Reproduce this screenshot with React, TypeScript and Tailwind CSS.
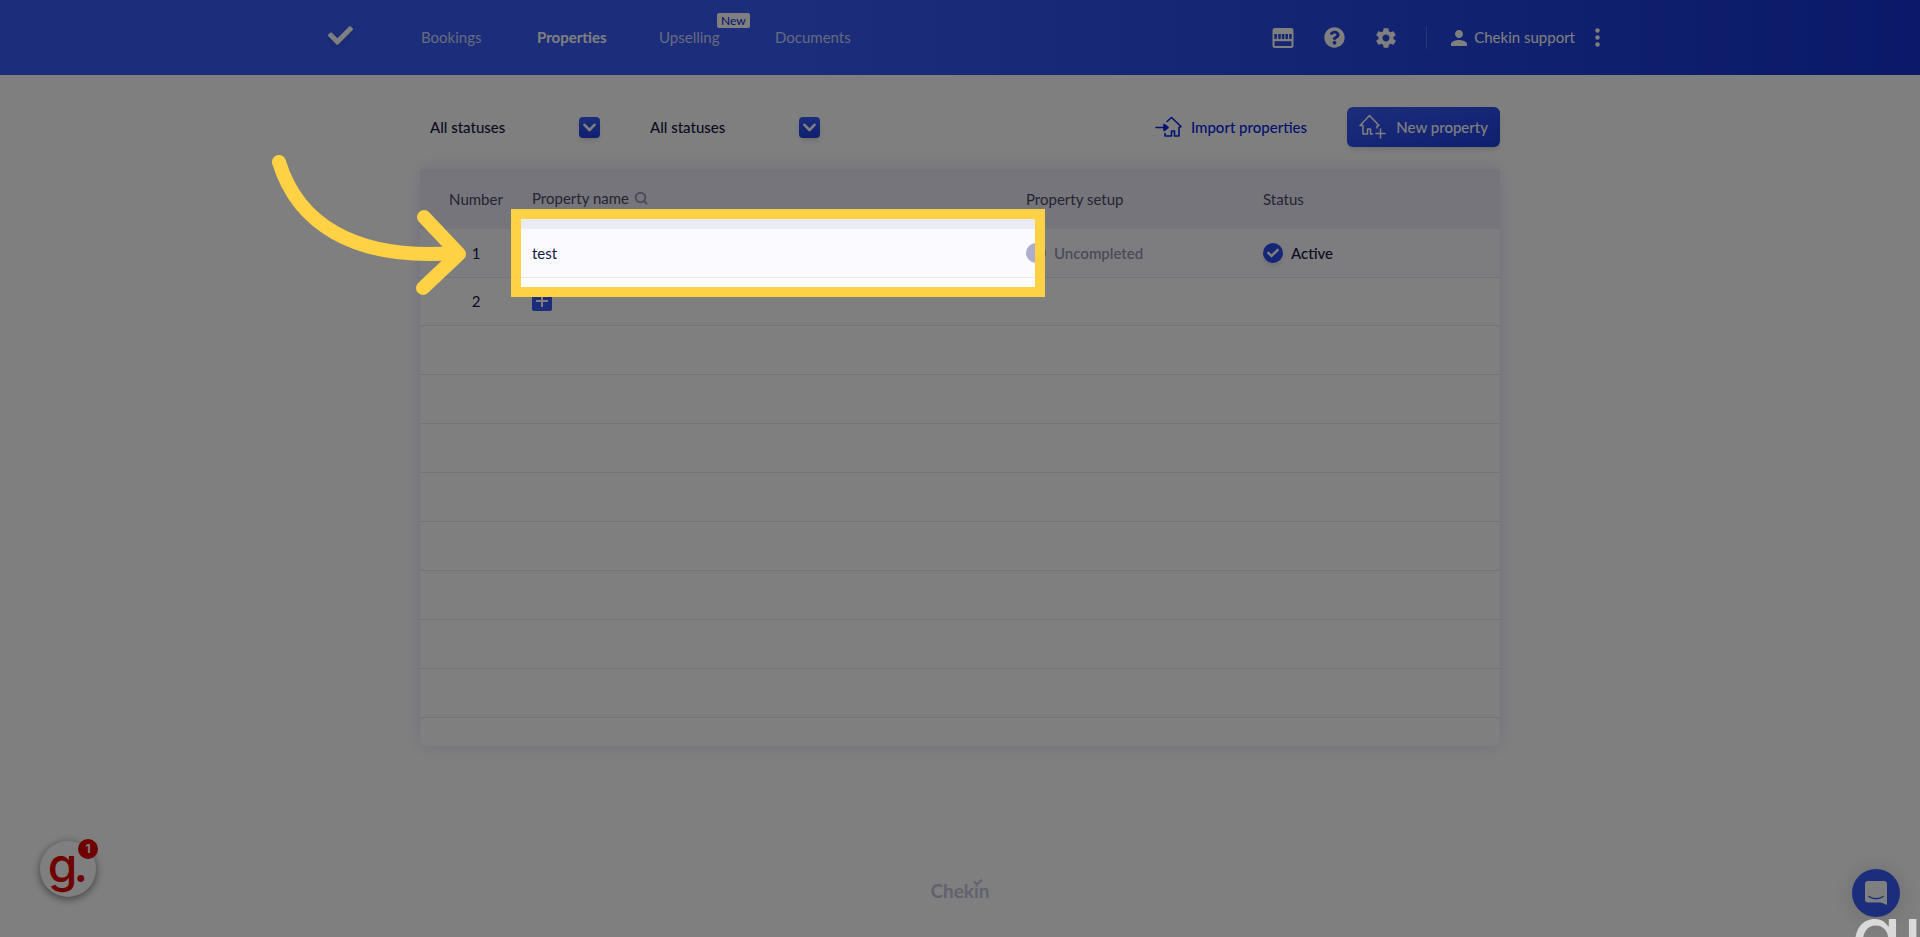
import React from 'react';
import { FaCheck, FaQuestionCircle } from 'react-icons/fa';
import { IoMdSettings } from 'react-icons/io';
import { MdPerson } from 'react-icons/md';

interface Row {
  number?: number;
  name?: string;
}

const rows: Row[] = [{ number: 1, name: 'test' }, { number: 2 }, {}, {}, {}, {}, {}, {}, {}, {}];

const StoreIcon = () => (
  <svg width="22" height="20" viewBox="0 0 22 20" fill="none">
    <rect x="0.5" y="0" width="21" height="20" rx="2.5" fill="white" />
    <path
      d="M2.300 6h2.600v4a1.300 1.300 0 0 1-2.600 0zM6.200 6h2.600v4a1.300 1.300 0 0 1-2.600 0zM9.800 6h2.600v4a1.300 1.300 0 0 1-2.600 0zM13.400 6h2.600v4a1.300 1.300 0 0 1-2.600 0zM17.100 6h2.600v4a1.300 1.300 0 0 1-2.600 0z"
      fill="#2d4de6"
    />
    <path d="M2.500 13.200h17V18h-17z" fill="#2d4de6" />
  </svg>
);

const HomeIcon = () => (
  <svg width="28" height="26" viewBox="0 0 28 26" fill="none" stroke="white" strokeWidth="1.5" strokeLinejoin="round" strokeLinecap="round">
    <path d="M13.500 20h-2v-5H8.500v5H4v-8.500H1L10.500 1.500 20 11.500l-2 .5v2" />
    <path d="M21.500 15v9M17 19.500h9" />
  </svg>
);

const ImportIcon = () => (
  <svg width="28" height="22" viewBox="0 0 28 22" fill="none" stroke="#0026e0" strokeWidth="1.6" strokeLinejoin="round" strokeLinecap="round">
    <path d="M12 5.500 16.500 1.500l9.500 9-2 1v8.500h-4.500v-5h-3v5H10v-2.500" />
    <path d="M1 11.500h9" />
    <path d="M9 8.500l4 3-4 3z" fill="#0026e0" />
  </svg>
);

const StatusFilter = ({ label }: { label: string }) => (
  <div className="relative flex w-[170px] items-center">
    <select aria-label={label} className="w-full appearance-none bg-transparent text-[15px] font-medium text-[#161643]">
      <option>All statuses</option>
    </select>
    <span className="pointer-events-none absolute right-0 flex h-[21px] w-[21px] items-center justify-center rounded bg-linear-to-b from-[#385bf8] to-[#1f3fe0] shadow-md">
      <svg width="13" height="9" viewBox="0 0 13 9" fill="none" stroke="white" strokeWidth="2.600" strokeLinecap="round" strokeLinejoin="round">
        <path d="M1.500 1.800 6.500 7l5-5.200" />
      </svg>
    </span>
  </div>
);

const Header = () => (
  <header className="flex h-[75px] items-center justify-center bg-linear-to-r from-[#385bf8] from-40% to-[#1433d2] text-[15px] text-white">
    <div className="flex w-full max-w-[1280px] items-center">
      <a href="#home" aria-label="Home" className="mb-1 w-[101px] pl-2">
        <FaCheck size={25} className="drop-shadow-md" />
      </a>
      <nav className="flex text-white/75">
        <a href="#bookings" className="w-[116px]">Bookings</a>
        <a href="#properties" className="w-[122px] font-bold text-white">Properties</a>
        <a href="#upselling" className="relative w-[116px]">
          Upselling
          <span className="absolute -top-[13px] left-[58px] rounded-xs bg-white px-1 text-[12px] leading-[15px] text-[#0026e0]">New</span>
        </a>
        <a href="#documents">Documents</a>
      </nav>
      <div className="ml-auto flex items-center">
        <button aria-label="Marketplace" className="mr-[30px]"><StoreIcon /></button>
        <button aria-label="Help" className="mr-[29px]"><FaQuestionCircle size={21} /></button>
        <button aria-label="Settings" className="mr-[28px]"><IoMdSettings size={24} /></button>
        <div className="mr-5 h-[23px] w-px bg-white/20" />
        <button className="flex items-center gap-[3px]">
          <MdPerson size={24} />
          Chekin support
        </button>
        <button aria-label="More" className="ml-5">
          <svg width="5" height="19" viewBox="0 0 5 19" fill="white">
            <circle cx="2.500" cy="2.500" r="2.200" />
            <circle cx="2.500" cy="9.500" r="2.200" />
            <circle cx="2.500" cy="16.500" r="2.200" />
          </svg>
        </button>
      </div>
    </div>
  </header>
);

const Toolbar = () => (
  <div className="flex h-[40px] items-center pl-[10px]">
    <div className="flex gap-[50px]">
      <StatusFilter label="Status" />
      <StatusFilter label="Setup status" />
    </div>
    <button className="ml-auto flex items-center gap-2 text-[15px] font-medium text-[#0026e0]">
      <ImportIcon />
      Import properties
    </button>
    <button className="ml-10 flex h-[40px] w-[153px] items-center justify-between rounded-md bg-linear-to-br from-[#385bf8] to-[#1f3fe0] px-3 text-[15px] font-medium text-white shadow-md">
      <HomeIcon />
      New property
    </button>
  </div>
);

const PropertiesTable = () => (
  <div className="mt-[22px] rounded-lg pb-[28px] shadow-[0_0_16px_rgba(150,150,255,0.3)]">
    <table className="w-full table-fixed border-collapse text-left text-[15px] text-[#161643]">
      <thead>
        <tr className="h-[60px] bg-[#ebebf7] text-[#494967]">
          <th className="w-[112px] text-center font-normal">Number</th>
          <th className="w-[494px] font-normal">
            <span className="flex items-center gap-[5px] pb-0.5">
              Property name
              <svg width="14" height="14" viewBox="0 0 14 14" fill="none" stroke="#9696b9" strokeWidth="2" strokeLinecap="round">
                <circle cx="6.500" cy="6.500" r="4.800" />
                <path d="M10 10l2.500 2.500" />
              </svg>
            </span>
          </th>
          <th className="w-[237px] font-normal">Property setup</th>
          <th className="font-normal">Status</th>
        </tr>
      </thead>
      <tbody>
        {rows.map((row, index) => (
          <tr
            key={index}
            className={`border-b border-[#e9e9f0] ${row.number ? 'h-[48px]' : 'h-[49px]'} ${row.name ? 'bg-[#fbfbff]' : ''}`}
          >
            <td className="text-center">{row.number}</td>
            <td>
              {row.name}
              {row.number && !row.name && (
                <button aria-label="Add property" className="flex h-5 w-5 items-center justify-center rounded-xs bg-[#385bf8]">
                  <svg width="12" height="12" viewBox="0 0 12 12" stroke="white" strokeWidth="2">
                    <path d="M6 0v12M0 6h12" />
                  </svg>
                </button>
              )}
            </td>
            <td>
              {row.name && (
                <span className="flex items-center gap-2 font-semibold text-[#9696b9]">
                  <span className="h-5 w-5 rounded-full bg-[#adadd0]" />
                  Uncompleted
                </span>
              )}
            </td>
            <td>
              {row.name && (
                <span className="flex items-center gap-2 font-medium">
                  <span className="flex h-5 w-5 items-center justify-center rounded-full bg-[#2a4bee] shadow-md">
                    <FaCheck size={12} className="text-white" />
                  </span>
                  Active
                </span>
              )}
            </td>
          </tr>
        ))}
      </tbody>
    </table>
  </div>
);

const Footer = () => (
  <footer className="mt-auto mb-8 flex justify-center">
    <span className="relative text-[19px] leading-[28px] font-bold text-[#c3c3e0]">
      Chekin
      <svg className="absolute top-[2px] right-[7px] bg-white" width="10" height="7" viewBox="0 0 10 7" fill="none" stroke="#c3c3e0" strokeWidth="2.200">
        <path d="M1 2.500 4 5.500 9 .8" />
      </svg>
    </span>
  </footer>
);

const GuideBadge = () => (
  <button
    aria-label="Guides"
    className="absolute bottom-[40px] left-[40px] flex h-14 w-14 items-center justify-center rounded-full bg-white font-['Inter',sans-serif] shadow-[0_2px_8px_rgba(0,0,0,0.5)]"
  >
    <span className="flex pb-2 text-[48px] leading-[48px] font-medium text-[#e00000]">
      g<span className="-ml-1">.</span>
    </span>
    <span className="absolute -top-[2px] -right-[2px] flex h-5 w-5 items-center justify-center rounded-full bg-[#e00000] text-[12px] font-bold text-white">
      1
    </span>
  </button>
);

const ChatButton = () => (
  <button
    aria-label="Open chat"
    className="absolute right-5 bottom-5 flex h-12 w-12 items-center justify-center rounded-full bg-[#385bf8] shadow-[0_2px_24px_rgba(0,0,0,0.15)]"
  >
    <svg width="22" height="24" viewBox="0 0 22 24" fill="none">
      <path d="M3 0h16a3 3 0 0 1 3 3v21l-6-2.500H3a3 3 0 0 1-3-3V3a3 3 0 0 1 3-3z" fill="white" />
      <path d="M4 15.500c4 3 10 3 14 0" stroke="#385bf8" strokeWidth="1.500" strokeLinecap="round" />
    </svg>
  </button>
);

// Dims the whole page except the framed cell
const Spotlight = () => (
  <div className="pointer-events-none absolute top-[209px] left-1/2 z-10 -ml-[449px] h-[88px] w-[534px] border-[10px] border-[#ffd145] shadow-[0_0_0_4000px_rgba(0,0,0,0.5)]">
    <svg className="absolute -top-[64px] -left-[250px]" width="210" height="150" viewBox="0 0 210 150" fill="none" stroke="#ffd145" strokeWidth="14" strokeLinecap="round" strokeLinejoin="round">
      <path d="M8 7C26 66 80 106 184 98" />
      <path d="M153 62 188 99 152 133" />
    </svg>
  </div>
);

const App: React.FC = () => {
  return (
    <div className="relative flex min-h-screen flex-col overflow-hidden bg-white font-['Lato',sans-serif]">
      <Header />
      <main className="mx-auto mt-8 w-full max-w-[1080px]">
        <Toolbar />
        <PropertiesTable />
      </main>
      <Footer />
      <GuideBadge />
      <ChatButton />
      <Spotlight />
      <div className="absolute right-0 -bottom-[40px] z-20 w-[69px] font-['Inter',sans-serif] text-[84px] leading-none whitespace-nowrap text-[#d9d9d9]">
        gu
      </div>
    </div>
  );
};

export default App;
